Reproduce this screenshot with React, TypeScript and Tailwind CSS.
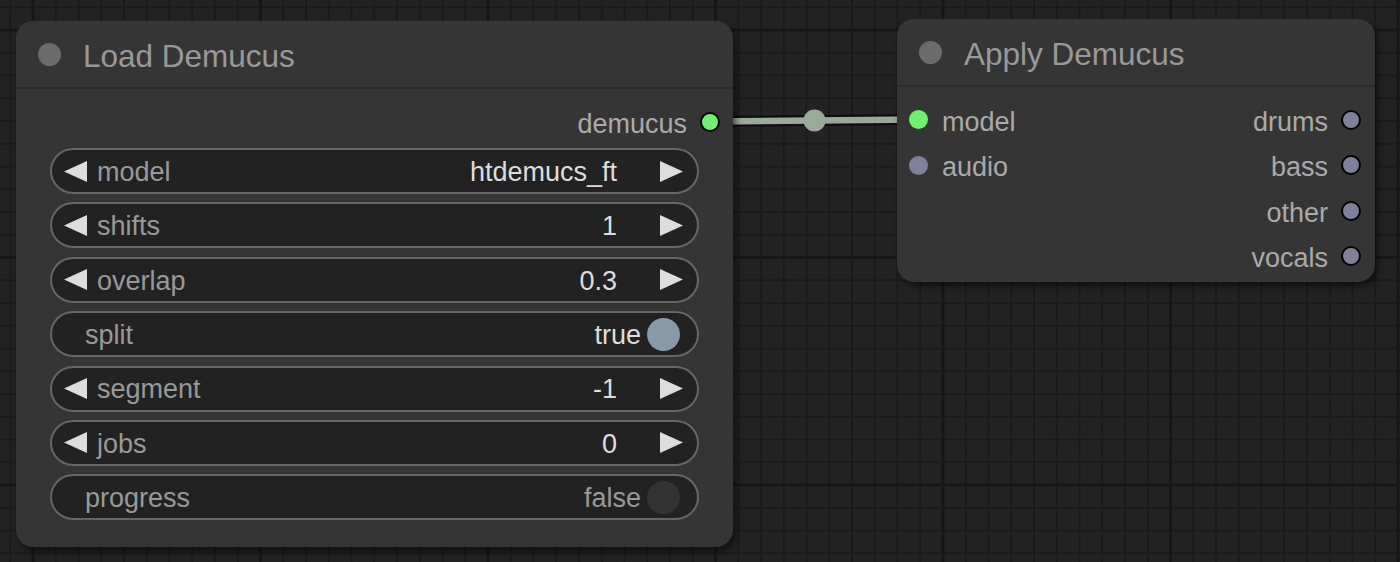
import React from "react";

type Widget =
  | { kind: "number"; label: string; value: string }
  | { kind: "toggle"; label: string; value: boolean };

const widgets: Widget[] = [
  { kind: "number", label: "model", value: "htdemucs_ft" },
  { kind: "number", label: "shifts", value: "1" },
  { kind: "number", label: "overlap", value: "0.3" },
  { kind: "toggle", label: "split", value: true },
  { kind: "number", label: "segment", value: "-1" },
  { kind: "number", label: "jobs", value: "0" },
  { kind: "toggle", label: "progress", value: false },
];

const Arrow = ({ dir }: { dir: "left" | "right" }) => (
  <svg width="23" height="21" viewBox="0 0 23 21" className="shrink-0">
    <polygon
      points={dir === "left" ? "23,0 0,10.5 23,21" : "0,0 23,10.5 0,21"}
      fill="#dddddd"
    />
  </svg>
);

const NumberWidget = ({ label, value }: { label: string; value: string }) => (
  <div className="flex h-[46px] items-center rounded-full border-2 border-[#666] bg-[#222] pl-[12px] pr-[14px]">
    <Arrow dir="left" />
    <span className="ml-[10px] pt-[2px] text-[#999]">{label}</span>
    <span className="ml-auto pt-[2px] text-[#ddd]">{value}</span>
    <span className="ml-[43px] flex">
      <Arrow dir="right" />
    </span>
  </div>
);

const ToggleWidget = ({ label, value }: { label: string; value: boolean }) => (
  <div className="flex h-[46px] items-center rounded-full border-2 border-[#666] bg-[#222] pl-[33px] pr-[17px]">
    <span className="pt-[2px] text-[#999]">{label}</span>
    <span className={value ? "ml-auto pt-[2px] text-[#ddd]" : "ml-auto pt-[2px] text-[#999]"}>
      {value ? "true" : "false"}
    </span>
    <span
      className={
        value
          ? "ml-[6px] h-[33px] w-[33px] rounded-full bg-[#8899aa]"
          : "ml-[6px] h-[33px] w-[33px] rounded-full bg-[#333]"
      }
    />
  </div>
);

const TitleBar = ({ title }: { title: string }) => (
  <div className="flex h-[68px] items-center gap-[22px] border-b-2 border-[#2b2b2b] pl-[22px]">
    <span className="h-[23px] w-[23px] rounded-full bg-[#6b6b6b]" />
    <span className="mt-[5px] text-[31.5px] text-[#999]">{title}</span>
  </div>
);

const InSlot = ({ name, color }: { name: string; color: string }) => (
  <div className="flex h-[45.5px] items-center gap-[14px]">
    <span className={`h-[19px] w-[19px] rounded-full ${color}`} />
    <span className="pt-[4px] text-[#aaa]">{name}</span>
  </div>
);

const OutSlot = ({ name, color }: { name: string; color: string }) => (
  <div className="flex h-[45.5px] items-center justify-end gap-[13px]">
    <span className="pt-[4px] text-[#aaa]">{name}</span>
    <span className={`h-[20px] w-[20px] rounded-full border-2 border-black ${color}`} />
  </div>
);

export default function App() {
  return (
    <div className="relative h-[562px] w-[1400px] overflow-hidden bg-[#232323] bg-[linear-gradient(to_right,#171717_3px,transparent_3px),linear-gradient(to_bottom,#171717_3px,transparent_3px),linear-gradient(to_right,#1b1b1b_2px,transparent_2px),linear-gradient(to_bottom,#1b1b1b_2px,transparent_2px)] bg-size-[227.5px_227.5px,227.5px_227.5px,22.75px_22.75px,22.75px_22.75px] bg-position-[31.5px_28.5px,31.5px_28.5px,9.25px_6.25px,9.25px_6.25px] font-['Liberation_Sans',Arial,sans-serif] text-[27px]">
      {/* link between the nodes */}
      <svg className="absolute inset-0" width="1400" height="562">
        <line x1="710" y1="121.5" x2="918" y2="119.5" stroke="rgba(0,0,0,0.6)" strokeWidth="11" />
        <line x1="710" y1="121.5" x2="918" y2="119.5" stroke="#99aa99" strokeWidth="6.5" />
        <circle cx="814.5" cy="120.5" r="11" fill="#99aa99" />
      </svg>

      {/* Load Demucus */}
      <div className="absolute left-[16px] top-[21px] h-[526px] w-[717px] rounded-[17px] bg-[#353535] shadow-[3px_4px_7px_rgba(0,0,0,0.55)]">
        <TitleBar title="Load Demucus" />
        <div className="pt-[10px]">
          <div className="pr-[13px]">
            <OutSlot name="demucus" color="bg-[#70f070]" />
          </div>
          <div className="mt-[3.5px] flex flex-col gap-[8.4px] px-[34px]">
            {widgets.map((w, i) =>
              w.kind === "number" ? (
                <NumberWidget key={i} label={w.label} value={w.value} />
              ) : (
                <ToggleWidget key={i} label={w.label} value={w.value} />
              )
            )}
          </div>
        </div>
      </div>

      {/* Apply Demucus */}
      <div className="absolute left-[897px] top-[19px] h-[263px] w-[478px] rounded-[17px] bg-[#353535] shadow-[3px_4px_7px_rgba(0,0,0,0.55)]">
        <TitleBar title="Apply Demucus" />
        <div className="flex justify-between pt-[10px]">
          <div className="flex flex-col pl-[12px]">
            <InSlot name="model" color="bg-[#70f070]" />
            <InSlot name="audio" color="bg-[#80809a]" />
          </div>
          <div className="flex flex-col pr-[14px]">
            <OutSlot name="drums" color="bg-[#80809a]" />
            <OutSlot name="bass" color="bg-[#80809a]" />
            <OutSlot name="other" color="bg-[#80809a]" />
            <OutSlot name="vocals" color="bg-[#80809a]" />
          </div>
        </div>
      </div>
    </div>
  );
}
